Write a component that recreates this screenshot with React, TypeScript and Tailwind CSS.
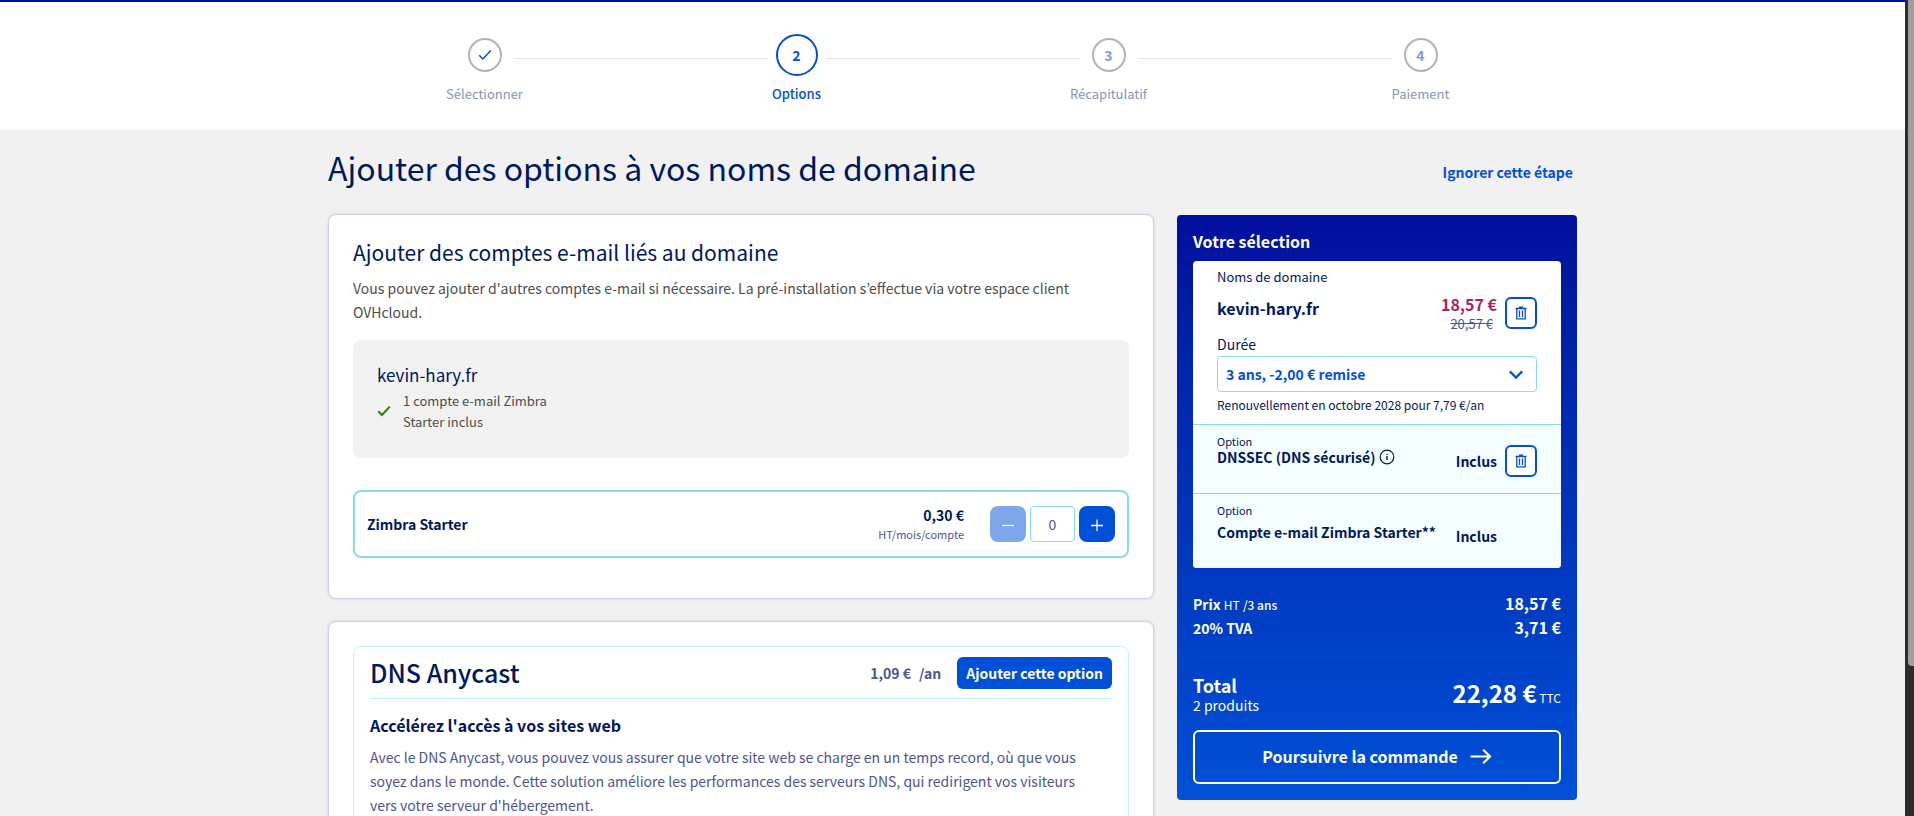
import { useState } from "react";

const steps = [
  { id: 1, label: "Sélectionner", state: "done" },
  { id: 2, label: "Options", state: "active" },
  { id: 3, label: "Récapitulatif", state: "todo" },
  { id: 4, label: "Paiement", state: "todo" },
];

function CheckIcon({ className }: { className: string }) {
  return (
    <svg viewBox="0 0 14 12" fill="none" stroke="currentColor" className={className} aria-hidden="true">
      <path d="M1.2 6.2 4.9 10 12.8 1.6" />
    </svg>
  );
}

function TrashIcon() {
  return (
    <svg viewBox="0 0 12 14" fill="none" stroke="currentColor" strokeWidth="1.3" className="h-3.5 w-3" aria-hidden="true">
      <path d="M0.5 2.5h11M1.8 2.6v10.2h8.4V2.6M4.5 4.6v6.4M7.5 4.6v6.4" />
      <path d="M4 1.4h4" strokeWidth="2" />
    </svg>
  );
}

function RemoveButton({ label }: { label: string }) {
  return (
    <button
      type="button"
      aria-label={label}
      className="flex size-8 shrink-0 items-center justify-center rounded-md border-2 border-[#0050d7] bg-white text-[#0050d7]"
    >
      <TrashIcon />
    </button>
  );
}

function Stepper() {
  return (
    <header className="border-t-2 border-[#000e9c] bg-white pt-8 pb-[26px]">
      <ol className="mx-auto flex max-w-[1248px]">
        {steps.map((step, index) => {
          const active = step.state === "active";
          return (
            <li key={step.id} className="flex flex-1 flex-col items-center gap-2">
              <div className="flex h-[42px] w-full items-center">
                <span className={index > 0 ? "mt-1.5 h-px flex-1 bg-[#e6e6e6]" : "flex-1"} />
                <span className="flex w-[58px] justify-center">
                  <span
                    className={
                      active
                        ? "flex size-[42px] items-center justify-center rounded-full border-2 border-[#0050d7] text-sm font-bold text-[#0050d7]"
                        : "flex size-[34px] items-center justify-center rounded-full border-2 border-[#b3b3b3] text-sm font-bold text-[#8c9bc3]"
                    }
                  >
                    {step.state === "done" ? (
                      <CheckIcon className="h-3 w-3.5 stroke-[1.5] text-[#0050d7]" />
                    ) : (
                      step.id
                    )}
                  </span>
                </span>
                <span className={index < steps.length - 1 ? "mt-1.5 h-px flex-1 bg-[#e6e6e6]" : "flex-1"} />
              </div>
              <span
                className={
                  active
                    ? "text-[13px] leading-5 font-medium text-[#0050d7]"
                    : "text-[13px] leading-5 text-[#8594bd]"
                }
              >
                {step.label}
              </span>
            </li>
          );
        })}
      </ol>
    </header>
  );
}

function EmailCard() {
  const [count, setCount] = useState(0);
  return (
    <section className="rounded-lg border border-[#cfd0e8] bg-white px-6 pt-[23px] pb-10 shadow-[0_0_3px_#cfd0e8]">
      <h2 className="text-[21px] leading-7 text-[#00185e]">Ajouter des comptes e-mail liés au domaine</h2>
      <p className="mt-2.5 text-sm leading-6 text-[#4d4d4d]">
        Vous pouvez ajouter d'autres comptes e-mail si nécessaire. La pré-installation s’effectue via votre espace
        client OVHcloud.
      </p>
      <div className="mt-4 rounded-lg bg-[#f2f2f2] px-6 pt-[23px] pb-[26px]">
        <h3 className="text-[17px] leading-6 text-[#00185e]">kevin-hary.fr</h3>
        <div className="flex items-center gap-3 pt-[3px]">
          <CheckIcon className="h-3 w-3.5 stroke-2 text-[#2b8000]" />
          <p className="w-44 text-[13px] leading-[21px] text-[#4d4d4d]">1 compte e-mail Zimbra Starter inclus</p>
        </div>
      </div>
      <div className="mt-8 flex items-center rounded-lg border-2 border-[#85d9fd] px-3 py-3">
        <label htmlFor="zimbra-count" className="flex-1 text-sm font-bold text-[#00185e]">
          Zimbra Starter
        </label>
        <div className="mr-[26px] pb-0.5 text-right">
          <p className="text-sm leading-[22px] font-bold text-[#00185e]">0,30 €</p>
          <p className="text-[11px] leading-4 text-[#4d5592]">HT/mois/compte</p>
        </div>
        <div className="flex gap-1">
          <button
            type="button"
            aria-label="Retirer un compte"
            disabled={count === 0}
            onClick={() => setCount(count - 1)}
            className="flex size-9 items-center justify-center rounded-lg bg-[#0050d7] text-white disabled:opacity-50"
          >
            <svg viewBox="0 0 14 14" stroke="currentColor" strokeWidth="1.3" className="size-3.5" aria-hidden="true">
              <path d="M1 8.5h12" />
            </svg>
          </button>
          <input
            id="zimbra-count"
            inputMode="numeric"
            value={count}
            onChange={(event) => setCount(Number(event.target.value) || 0)}
            className="h-9 w-[45px] rounded border border-[#85d9fd] text-center text-sm text-[#4d5592]"
          />
          <button
            type="button"
            aria-label="Ajouter un compte"
            onClick={() => setCount(count + 1)}
            className="flex size-9 items-center justify-center rounded-lg bg-[#0050d7] text-white"
          >
            <svg viewBox="0 0 14 14" stroke="currentColor" strokeWidth="1.3" className="size-3.5" aria-hidden="true">
              <path d="M1 8.5h12M7 2.5v12" />
            </svg>
          </button>
        </div>
      </div>
    </section>
  );
}

function AnycastCard() {
  return (
    <section className="rounded-lg border border-[#cfd0e8] bg-white p-6 shadow-[0_0_3px_#cfd0e8]">
      <div className="rounded-lg border border-[#bef1ff] px-4 pt-2 pb-6">
        <div className="flex items-center border-b border-[#bef1ff] pb-2">
          <h2 className="flex-1 text-[25px] leading-[35px] font-medium text-[#00185e]">DNS Anycast</h2>
          <p className="mr-4 flex gap-2 text-sm font-bold text-[#4d5592]">
            <span>1,09 €</span>
            <span>/an</span>
          </p>
          <button type="button" className="h-8 rounded-md bg-[#0050d7] px-[9px] text-sm font-bold text-white">
            Ajouter cette option
          </button>
        </div>
        <h3 className="mt-3.5 text-base leading-6 font-bold text-[#00185e]">Accélérez l'accès à vos sites web</h3>
        <p className="mt-2 pr-3 text-sm leading-6 text-[#4d5592]">
          Avec le DNS Anycast, vous pouvez vous assurer que votre site web se charge en un temps record, où que vous
          soyez dans le monde. Cette solution améliore les performances des serveurs DNS, qui redirigent vos visiteurs
          vers votre serveur d'hébergement.
        </p>
      </div>
    </section>
  );
}

function Cart() {
  return (
    <aside className="mt-px w-[400px] shrink-0 rounded bg-linear-to-b from-[#000e9c] to-[#0050d7] px-4 pt-3 pb-4 text-white">
      <h2 className="text-base leading-7 font-bold">Votre sélection</h2>
      <div className="mt-1.5 overflow-hidden rounded bg-white text-[#00185e]">
        <div className="border-b border-[#85d9fd] px-6 pt-1.5 pb-[9px]">
          <p className="text-[13px] leading-5">Noms de domaine</p>
          <div className="mt-2.5 flex">
            <h3 className="flex-1 text-base leading-[22px] font-bold">kevin-hary.fr</h3>
            <div className="mr-2 flex flex-col gap-1 text-right">
              <p className="text-base leading-[14px] font-bold text-[#ad1f6b]">18,57 €</p>
              <p className="pr-1 text-[13px] leading-[18px] text-[#4d5592] line-through">20,57 €</p>
            </div>
            <RemoveButton label="Supprimer kevin-hary.fr" />
          </div>
          <label htmlFor="duration" className="block text-sm leading-[23px]">
            Durée
          </label>
          <div className="relative">
            <select
              id="duration"
              className="h-9 w-full appearance-none rounded border border-[#85d9fd] bg-white px-2 text-sm font-bold text-[#0050d7]"
            >
              <option>3 ans, -2,00 € remise</option>
            </select>
            <svg
              viewBox="0 0 14 10"
              fill="none"
              stroke="currentColor"
              strokeWidth="2.2"
              className="pointer-events-none absolute top-3.5 right-3.5 h-2.5 w-3.5 text-[#0050d7]"
              aria-hidden="true"
            >
              <path d="m0.8 1.4 6.2 6.2 6.2-6.2" />
            </svg>
          </div>
          <p className="mt-[3px] text-xs leading-5">Renouvellement en octobre 2028 pour 7,79 €/an</p>
        </div>
        <div className="flex border-b border-[#85d9fd] bg-[#f5feff] px-6 pt-2 pb-4">
          <div className="flex-1">
            <p className="text-[11px] leading-4">Option</p>
            <h3 className="flex items-center gap-1 text-sm leading-4 font-bold">
              DNSSEC (DNS sécurisé)
              <svg viewBox="0 0 16 16" fill="none" stroke="currentColor" className="size-4" aria-hidden="true">
                <circle cx="8" cy="8" r="6.8" strokeWidth="1.2" />
                <path d="M8 7v4M8 5v1" strokeWidth="1.4" />
              </svg>
            </h3>
          </div>
          <p className="mt-3 mr-2 h-8 text-sm leading-8 font-bold">Inclus</p>
          <div className="mt-3">
            <RemoveButton label="Supprimer DNSSEC" />
          </div>
        </div>
        <div className="flex bg-[#f5feff] px-6 pt-2 pb-4">
          <div className="flex-1">
            <p className="text-[11px] leading-4">Option</p>
            <h3 className="mt-1.5 text-sm leading-4 font-bold">Compte e-mail Zimbra Starter**</h3>
          </div>
          <p className="mt-[18px] mr-10 h-8 text-sm leading-8 font-bold">Inclus</p>
        </div>
      </div>
      <dl className="mt-[23px] border-b border-[#0048cc] pb-[17px] leading-6 font-bold">
        <div className="flex items-baseline justify-between">
          <dt className="text-sm">
            Prix <span className="text-xs font-normal">HT</span> <span className="text-xs font-medium">/3 ans</span>
          </dt>
          <dd className="text-base leading-6">18,57 €</dd>
        </div>
        <div className="flex items-baseline justify-between">
          <dt className="text-sm">20% TVA</dt>
          <dd className="text-base leading-6">3,71 €</dd>
        </div>
      </dl>
      <div className="mt-[18px] flex items-center justify-between">
        <div>
          <p className="text-lg leading-5 font-bold">Total</p>
          <p className="text-sm leading-5">2 produits</p>
        </div>
        <p className="text-xs leading-8">
          <strong className="text-2xl leading-8 font-bold">22,28 €</strong> TTC
        </p>
      </div>
      <button
        type="button"
        className="mt-[15px] flex h-[54px] w-full items-center justify-center gap-3 rounded-md border-2 border-white pb-0.5 text-base font-bold"
      >
        Poursuivre la commande
        <svg viewBox="0 0 22 16" fill="none" stroke="currentColor" strokeWidth="2.2" className="h-4 w-[22px]" aria-hidden="true">
          <path d="M0.6 8.5h19.4M13.2 1.8 20 8.5l-6.8 6.7" />
        </svg>
      </button>
    </aside>
  );
}

export default function App() {
  return (
    <div className="flex h-screen bg-[#f1f1f1] font-['Noto_Sans_CJK_KR',sans-serif]" lang="fr">
      <div className="min-w-0 flex-1 overflow-y-auto [scrollbar-width:none]">
        <Stepper />
        <main className="mx-auto max-w-[1249px] pt-4 pb-10">
          <div className="flex items-center justify-between">
            <h1 className="text-[32px] leading-[42px] text-[#00185e]">Ajouter des options à vos noms de domaine</h1>
            <a href="#recapitulatif" className="mt-2.5 mr-1 text-sm font-bold text-[#0050d7]">
              Ignorer cette étape
            </a>
          </div>
          <div className="mt-[26px] flex items-start gap-[23px]">
            <div className="flex min-w-0 flex-1 flex-col gap-[22px]">
              <EmailCard />
              <AnycastCard />
            </div>
            <Cart />
          </div>
        </main>
      </div>
      <div className="flex w-[9px] shrink-0 flex-col bg-[#2c2c2c] pl-[3px]" aria-hidden="true">
        <div className="flex-[666] rounded-bl bg-[#9f9f9f]" />
        <div className="flex-[150]" />
      </div>
    </div>
  );
}
